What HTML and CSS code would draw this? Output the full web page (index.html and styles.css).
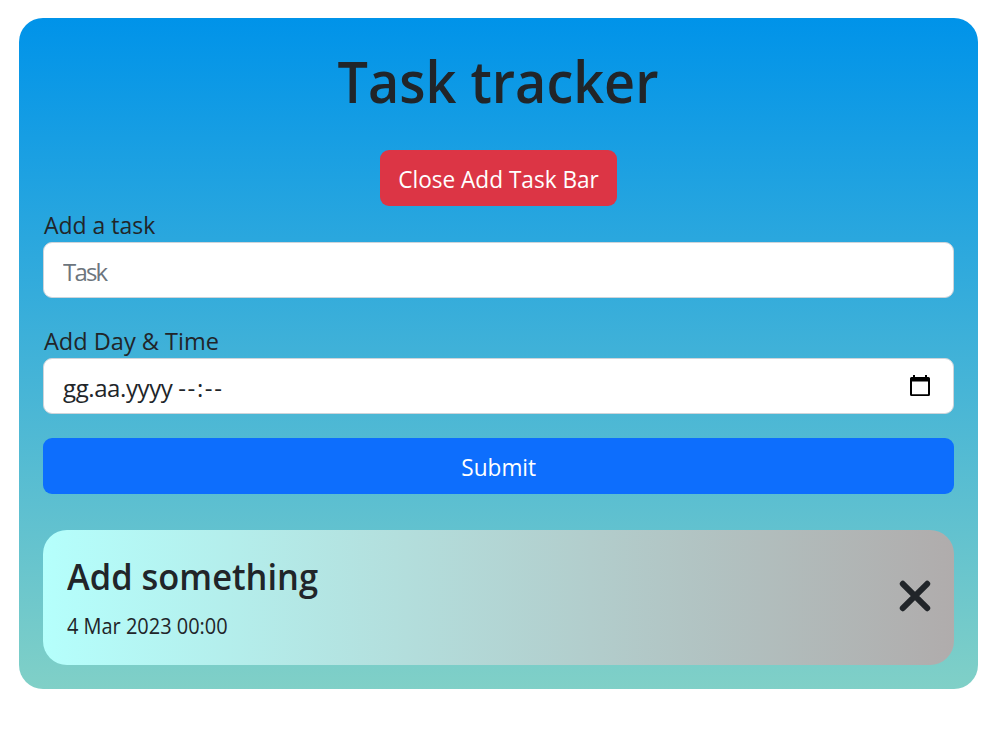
FILE: index.html
```html
<!DOCTYPE html>
<html lang="en">
<head>
<meta charset="utf-8">
<title>Task tracker</title>
<link rel="stylesheet" href="styles.css">
</head>
<body>
<main class="tracker">
  <h1 class="title">Task tracker</h1>
  <button class="btn btn-danger" type="button"><span class="narrow">Close Add Task Bar</span></button>
  <form class="form">
    <label class="caption" for="task">Add a task</label>
    <input class="control task-input" id="task" type="text" placeholder="Task">
    <label class="caption caption-day">Add Day &amp; Time</label>
    <div class="control date">
      <span class="date-text">gg.aa.yyyy <span class="time-text">--:--</span></span>
      <svg class="calendar" viewBox="0 0 20 22"><path fill-rule="evenodd" d="M3 0h2v2h10V0h2v2h1.500a1.500 1.500 0 0 1 1.500 1.500v16a1.500 1.500 0 0 1-1.500 1.500h-17a1.500 1.500 0 0 1-1.500-1.500V3.500a1.500 1.500 0 0 1 1.500-1.500H3zM2 6.500v12.800h16V6.500z"/></svg>
    </div>
    <button class="btn btn-primary" type="button"><span class="narrow">Submit</span></button>
  </form>
  <article class="task">
    <div>
      <h2 class="task-name">Add something</h2>
      <p class="task-date">4 Mar 2023 00:00</p>
    </div>
    <svg class="remove" viewBox="0 0 32 32"><path d="M3.8 3.8 28.2 28.2M28.2 3.8 3.8 28.2"/></svg>
  </article>
</main>
</body>
</html>
```
FILE: styles.css
```css
* { box-sizing: border-box; }
body { margin: 0; background: #fff; color: #212529; font: 24px/36px "Segoe UI", "Open Sans", "Noto Sans", sans-serif; }
.tracker { width: 959px; height: 671px; margin: 18px 0 0 19px; padding: 24px; border-radius: 24px; background: linear-gradient(180deg, #0093e9 0%, #80d0c7 100%); display: flex; flex-direction: column; align-items: center; }
h1, h2, p { margin: 0; }
.title { height: 108px; padding-top: 2px; font-size: 58.5px; line-height: 72px; font-weight: 600; white-space: nowrap; transform: scaleX(0.922); }
.btn { height: 56px; border: 0; border-radius: 9px; padding: 2px 0 0; color: #fff; font: inherit; }
.narrow { display: inline-block; transform: scaleX(0.942); }
.btn-danger { width: 237px; background: #dc3545; white-space: nowrap; }
.btn-primary { width: 100%; background: #0d6efd; margin-top: 24px; }
.form { width: 100%; display: flex; flex-direction: column; }
.caption { height: 36px; padding: 1px 0 0 1px; white-space: nowrap; transform: scaleX(0.957); transform-origin: left; }
.caption-day { transform: scaleX(0.98); }
.control { width: 100%; height: 56px; border: 1px solid #ced4da; border-radius: 9px; background: #fff; padding: 3px 18px 0; font: inherit; color: #212529; }
.task-input { margin-bottom: 24px; padding: 2px 18px 0 19px; letter-spacing: -1.8px; }
.task-input::placeholder { color: #6c757d; opacity: 1; }
.date { display: flex; justify-content: space-between; align-items: center; }
.date-text { padding-left: 1px; letter-spacing: -0.4px; }
.time-text { letter-spacing: 1.6px; }
.calendar { width: 20px; height: 22px; margin: 0 5px 4px 0; fill: #000; }
.task { width: 100%; height: 135px; margin-top: 36px; padding: 24px 23px 24px 24px; border-radius: 24px; display: flex; justify-content: space-between; align-items: center; background: linear-gradient(90deg, #b5fffc 0%, #b0acac 100%); }
.task-name { font-size: 36px; line-height: 43px; font-weight: 600; padding-top: 1px; margin-bottom: 12px; white-space: nowrap; transform: scaleX(0.956); transform-origin: left; }
.task-date { font-size: 21px; line-height: 32px; transform: scaleX(0.95); transform-origin: left; }
.remove { width: 32px; height: 32px; margin-bottom: 3px; stroke: #212529; stroke-width: 6; stroke-linecap: round; }
```
